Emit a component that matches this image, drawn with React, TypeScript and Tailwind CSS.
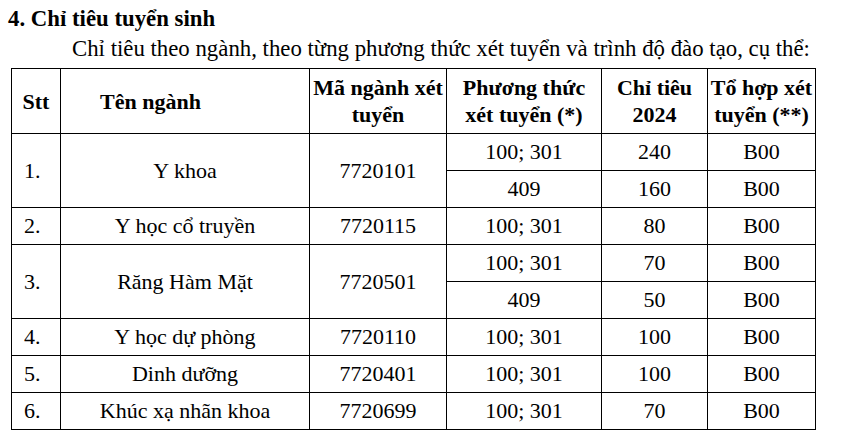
import React from 'react';

interface Row {
  stt?: string;
  name?: string;
  code?: string;
  span?: number;
  method: string;
  quota: string;
  combo: string;
}

const rows: Row[] = [
  { stt: '1.', name: 'Y khoa', code: '7720101', span: 2, method: '100; 301', quota: '240', combo: 'B00' },
  { method: '409', quota: '160', combo: 'B00' },
  { stt: '2.', name: 'Y học cổ truyền', code: '7720115', span: 1, method: '100; 301', quota: '80', combo: 'B00' },
  { stt: '3.', name: 'Răng Hàm Mặt', code: '7720501', span: 2, method: '100; 301', quota: '70', combo: 'B00' },
  { method: '409', quota: '50', combo: 'B00' },
  { stt: '4.', name: 'Y học dự phòng', code: '7720110', span: 1, method: '100; 301', quota: '100', combo: 'B00' },
  { stt: '5.', name: 'Dinh dưỡng', code: '7720401', span: 1, method: '100; 301', quota: '100', combo: 'B00' },
  { stt: '6.', name: 'Khúc xạ nhãn khoa', code: '7720699', span: 1, method: '100; 301', quota: '70', combo: 'B00' },
];

const cell = 'border border-black p-0 align-middle';

export default function App() {
  return (
    <div className="w-[847px] h-[444px] bg-white text-black [font-family:'Liberation_Serif',serif] text-[22px] overflow-hidden">
      <div className="pl-[8px] pt-[6px] leading-[26px] text-[22.8px] font-bold">4. Chỉ tiêu tuyển sinh</div>
      <div className="pl-[72px] mt-[4px] leading-[26px] text-[22.8px]">
        Chỉ tiêu theo ngành, theo từng phương thức xét tuyển và trình độ đào tạo, cụ thể:
      </div>

      <table className="ml-[11px] mt-[6px] w-[805px] table-fixed border-collapse">
        <colgroup>
          <col className="w-[49px]" />
          <col className="w-[249px]" />
          <col className="w-[137px]" />
          <col className="w-[155px]" />
          <col className="w-[106px]" />
          <col className="w-[108px]" />
        </colgroup>
        <thead>
          <tr className="h-[65px] font-bold leading-[27px]">
            <th className={`${cell} text-center`}>Stt</th>
            <th className={`${cell} text-left pl-[39px]`}>Tên ngành</th>
            <th className={`${cell} text-center`}>
              Mã ngành xét
              <br />
              tuyển
            </th>
            <th className={`${cell} text-center`}>
              Phương thức
              <br />
              xét tuyển (*)
            </th>
            <th className={`${cell} text-center`}>
              Chỉ tiêu
              <br />
              2024
            </th>
            <th className={`${cell} text-center`}>
              Tổ hợp xét
              <br />
              tuyển (**)
            </th>
          </tr>
        </thead>
        <tbody>
          {rows.map((r, i) => (
            <tr key={i} className="h-[37px] leading-[26px]">
              {r.stt && (
                <>
                  <td rowSpan={r.span} className={`${cell} text-left pl-[12px]`}>
                    {r.stt}
                  </td>
                  <td rowSpan={r.span} className={`${cell} text-center`}>
                    {r.name}
                  </td>
                  <td rowSpan={r.span} className={`${cell} text-center`}>
                    {r.code}
                  </td>
                </>
              )}
              <td className={`${cell} text-center`}>{r.method}</td>
              <td className={`${cell} text-center`}>{r.quota}</td>
              <td className={`${cell} text-center`}>{r.combo}</td>
            </tr>
          ))}
        </tbody>
      </table>
    </div>
  );
}
